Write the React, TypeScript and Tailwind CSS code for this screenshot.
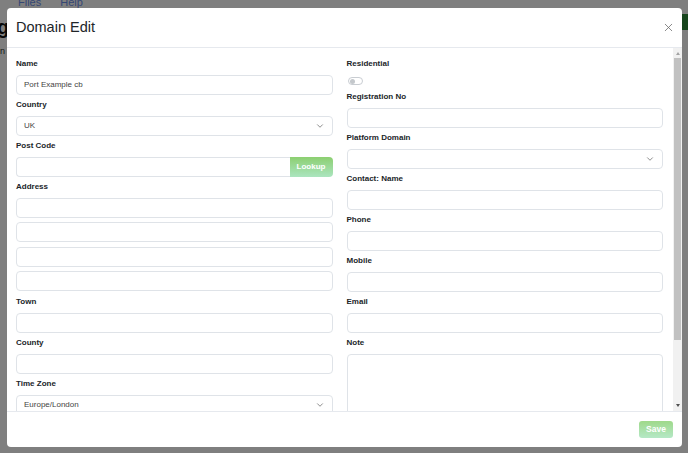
import { X, ChevronDown } from 'lucide-react';

const font = { fontFamily: '"Liberation Sans", Arial, sans-serif' };

function Label({ children }: { children: React.ReactNode }) {
  return <div className="h-[19px] pt-[1px] text-[8px] leading-[14px] font-bold text-[#212529]">{children}</div>;
}

function Input({ value }: { value?: string }) {
  return (
    <div className="h-[20px] w-full rounded-[4px] border border-[#dfe3e8] bg-white pl-[7px] text-[8px] leading-[18px] text-[#444]">
      {value}
    </div>
  );
}

function Select({ value }: { value?: string }) {
  return (
    <div className="flex h-[20px] w-full items-center justify-between rounded-[4px] border border-[#dfe3e8] bg-white pl-[7px] pr-[7px] text-[8px] text-[#444]">
      <span>{value}</span>
      <ChevronDown size={10} strokeWidth={1.6} className="text-[#555]" />
    </div>
  );
}

function Field({ label, children }: { label: string; children: React.ReactNode }) {
  return (
    <div className="mb-[2px]">
      <Label>{label}</Label>
      {children}
    </div>
  );
}

export default function App() {
  return (
    <div className="relative h-[453px] w-[688px] overflow-hidden bg-white" style={font}>
      {/* page behind the dialog */}
      <div className="flex gap-[19px] pl-[18px] -mt-[6px] text-[11px] text-[#6b8ee8]">
        <span>Files</span>
        <span>Help</span>
      </div>
      <div className="-ml-[3px] mt-[6px] text-[20px] font-bold leading-none text-[#111]">g</div>
      <div className="mt-[8px] text-[9px] text-[#333]">n</div>
      <div className="absolute right-0 top-[14px] h-[16px] w-[6px] bg-[#2f8a3a]" />

      {/* overlay */}
      <div className="absolute inset-0 bg-black/50" />

      {/* dialog */}
      <div className="absolute left-[7px] top-[8px] flex h-[439px] w-[675px] flex-col overflow-hidden rounded-[4px] bg-white">
        <div className="flex h-[40px] shrink-0 items-center justify-between border-b border-[#e6e9ee] pl-[9px] pr-[7px]">
          <h1 className="text-[14.5px] leading-none text-[#212529]">Domain Edit</h1>
          <X size={13} strokeWidth={1.4} className="text-[#666]" />
        </div>

        <div className="flex h-[363px] shrink-0 overflow-hidden">
          <div className="grid flex-1 grid-cols-2 gap-[14px] pl-[9px] pr-[10px] pt-[8px]">
            {/* left column */}
            <div>
              <Field label="Name">
                <Input value="Port Example cb" />
              </Field>
              <Field label="Country">
                <Select value="UK" />
              </Field>
              <Field label="Post Code">
                <div className="flex h-[20px]">
                  <div className="h-full flex-1 rounded-l-[4px] border border-r-0 border-[#dfe3e8]" />
                  <button className="h-full w-[43px] rounded-r-[4px] bg-linear-to-b from-[#8ccf70] to-[#abe5bf] text-[8px] font-bold text-white">
                    Lookup
                  </button>
                </div>
              </Field>
              <div className="mb-[3px]">
                <Label>Address</Label>
                <div className="flex flex-col gap-[4.33px]">
                  <Input />
                  <Input />
                  <Input />
                  <Input />
                </div>
              </div>
              <Field label="Town">
                <Input />
              </Field>
              <Field label="County">
                <Input />
              </Field>
              <Field label="Time Zone">
                <Select value="Europe/London" />
              </Field>
            </div>

            {/* right column */}
            <div>
              <div className="h-[14px] pt-[1px] text-[8px] leading-[14px] font-bold text-[#212529]">Residential</div>
              <div className="h-[19px] pt-[7px] pl-[1px]">
                <div className="flex h-[8px] w-[15px] items-center rounded-full border border-[#c9cdd2] px-[1px]">
                  <div className="h-[5px] w-[5px] rounded-full bg-[#c4c8cc]" />
                </div>
              </div>
              <Field label="Registration No">
                <Input />
              </Field>
              <Field label="Platform Domain">
                <Select />
              </Field>
              <Field label="Contact: Name">
                <Input />
              </Field>
              <Field label="Phone">
                <Input />
              </Field>
              <Field label="Mobile">
                <Input />
              </Field>
              <Field label="Email">
                <Input />
              </Field>
              <Field label="Note">
                <div className="h-[80px] w-full rounded-[4px] border border-[#dfe3e8]" />
              </Field>
            </div>
          </div>

          {/* scrollbar */}
          <div className="flex w-[9px] shrink-0 flex-col items-center bg-[#f1f1f1]">
            <div className="mt-[4px] h-0 w-0 border-x-[2.5px] border-b-[3px] border-x-transparent border-b-[#a3a3a3]" />
            <div className="mt-[3px] h-[282px] w-[7px] bg-[#c1c1c1]" />
            <div className="flex-1" />
            <div className="mb-[4px] h-0 w-0 border-x-[2.5px] border-t-[3px] border-x-transparent border-t-[#505050]" />
          </div>
        </div>

        <div className="flex flex-1 items-center justify-end border-t border-[#e6e9ee] pr-[9px]">
          <button className="h-[17px] w-[34px] rounded-[3px] bg-linear-to-b from-[#9fd98a] to-[#b5e8c6] text-[8.5px] font-bold text-white">
            Save
          </button>
        </div>
      </div>
    </div>
  );
}
